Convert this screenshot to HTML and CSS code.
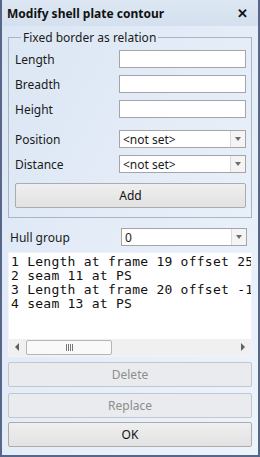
FILE: index.html
```html
<!DOCTYPE html>
<html lang="en">
<head>
  <meta charset="UTF-8">
  <title>Modify shell plate contour</title>
  <link rel="stylesheet" href="styles.css">
</head>
<body>
  <div class="window">
    <div class="titlebar">
      <span class="title">Modify shell plate contour</span>
      <span class="close">&#x2715;</span>
    </div>

    <div class="content">
      <!-- group box -->
      <fieldset class="group">
        <legend>Fixed border as relation</legend>
        <div class="row first">
          <label>Length</label>
          <div class="field"></div>
        </div>
        <div class="row">
          <label>Breadth</label>
          <div class="field"></div>
        </div>
        <div class="row">
          <label>Height</label>
          <div class="field"></div>
        </div>
        <div class="row combo-row first-combo">
          <label>Position</label>
          <div class="field combo"><span>&lt;not set&gt;</span><i class="arrow"></i></div>
        </div>
        <div class="row combo-row">
          <label>Distance</label>
          <div class="field combo"><span>&lt;not set&gt;</span><i class="arrow"></i></div>
        </div>
        <button class="btn add">Add</button>
      </fieldset>

      <div class="row hull">
        <label>Hull group</label>
        <div class="field combo"><span>0</span><i class="arrow"></i></div>
      </div>

      <!-- lista -->
      <div class="listbox">
        <div class="lines">
          <div>1 Length at frame 19 offset 2500</div>
          <div>2 seam 11 at PS</div>
          <div>3 Length at frame 20 offset -1500</div>
          <div>4 seam 13 at PS</div>
        </div>
        <div class="hscroll">
          <i class="sarrow left"></i>
          <div class="track">
            <div class="thumb"><span class="grip"></span></div>
          </div>
          <i class="sarrow right"></i>
        </div>
      </div>

      <button class="btn disabled">Delete</button>
      <button class="btn disabled">Replace</button>
      <button class="btn ok">OK</button>
    </div>
  </div>
</body>
</html>
```

FILE: styles.css
```css
* {
  box-sizing: border-box;
}

body {
  margin: 0;
  font-family: "Noto Sans", "Open Sans", sans-serif;
  font-size: 12px;
  color: #1a1a1a;
}

.window {
  width: 260px;
  height: 457px;
  border: 2px solid #56678a;
  border-top: none;
  background: linear-gradient(to bottom right, #dbe6f4, #edf3fb);
  display: flex;
  flex-direction: column;
}

.titlebar {
  height: 26px;
  display: flex;
  align-items: center;
  justify-content: space-between;
  padding: 0 10px 0 5px;
  background: linear-gradient(to bottom, #dde7f3, #d4e0ef);
}

.title {
  font-weight: bold;
  font-size: 12px;
  color: #111;
}

.close {
  font-size: 13px;
  font-weight: bold;
  color: #111;
}

.content {
  padding: 0 6px 0 6px;
  display: flex;
  flex-direction: column;
}

.group {
  margin: 3px 0 0 0;
  padding: 4px 5px 9px 6px;
  border: 1px solid #a9b5c4;
  border-radius: 0;
  min-width: 0;
}

.group legend {
  padding: 0 2px;
  margin-left: 6px;
  color: #1a1a1a;
}

.row {
  display: flex;
  align-items: center;
  height: 18px;
  margin-top: 7px;
}

.row.first {
  margin-top: 0;
}

.row label {
  width: 104px;
  flex: none;
}

.field {
  flex: 1;
  height: 18px;
  background: #fff;
  border: 1px solid #a5a5a5;
  margin-right: 0;
}

.first-combo {
  margin-top: 12px;
}

.combo {
  display: flex;
  align-items: center;
  padding-left: 3px;
  position: relative;
}

.combo span {
  flex: 1;
}

.combo .arrow {
  width: 15px;
  height: 16px;
  border-left: 1px solid #d9d9d9;
  background: #f4f4f4;
  position: relative;
}

.combo .arrow::after {
  content: "";
  position: absolute;
  left: 4px;
  top: 6px;
  border-left: 3px solid transparent;
  border-right: 3px solid transparent;
  border-top: 4px solid #6d6d6d;
}

.btn {
  display: block;
  width: 100%;
  height: 25px;
  font-family: inherit;
  font-size: 12px;
  color: #111;
  border: 1px solid #acacac;
  border-radius: 2px;
  background: linear-gradient(to bottom, #efefef, #e2e2e2);
  padding: 0;
}

.add {
  margin-top: 10px;
}

.hull {
  margin-top: 10px;
  padding-left: 2px;
}

.hull label {
  width: 111px;
}

.hull .field {
  margin-right: 5px;
}

.listbox {
  margin-top: 6px;
  background: #fff;
  border: 1px solid #f0f4fa;
  height: 105px;
  display: flex;
  flex-direction: column;
}

.lines {
  flex: 1;
  overflow: hidden;
  white-space: nowrap;
  font-family: "DejaVu Sans Mono", monospace;
  font-size: 13px;
  letter-spacing: 0.25px;
  line-height: 14px;
  padding: 2px 0 0 2px;
  color: #111;
}

.hscroll {
  height: 17px;
  display: flex;
  align-items: center;
  background: #f0f0f0;
}

.sarrow {
  width: 17px;
  height: 17px;
  position: relative;
}

.sarrow::after {
  content: "";
  position: absolute;
  top: 4px;
  border-top: 4px solid transparent;
  border-bottom: 4px solid transparent;
}

.sarrow.left::after {
  left: 6px;
  border-right: 4px solid #606060;
}

.sarrow.right::after {
  left: 7px;
  border-left: 4px solid #606060;
}

.track {
  flex: 1;
  height: 17px;
  display: flex;
  align-items: center;
}

.thumb {
  width: 86px;
  height: 15px;
  background: #f9f9f9;
  border: 1px solid #b5b5b5;
  border-radius: 2px;
  display: flex;
  justify-content: center;
  align-items: center;
}

.grip {
  width: 7px;
  height: 7px;
  background: repeating-linear-gradient(to right, #777 0 1px, transparent 1px 2px);
}

.disabled {
  margin-top: 5px;
  color: #8d8d8d;
  background: #e9ebee;
  border-color: #c3c7cc;
}

.disabled + .disabled {
  margin-top: 6px;
}

.ok {
  margin-top: 4px;
}
```
